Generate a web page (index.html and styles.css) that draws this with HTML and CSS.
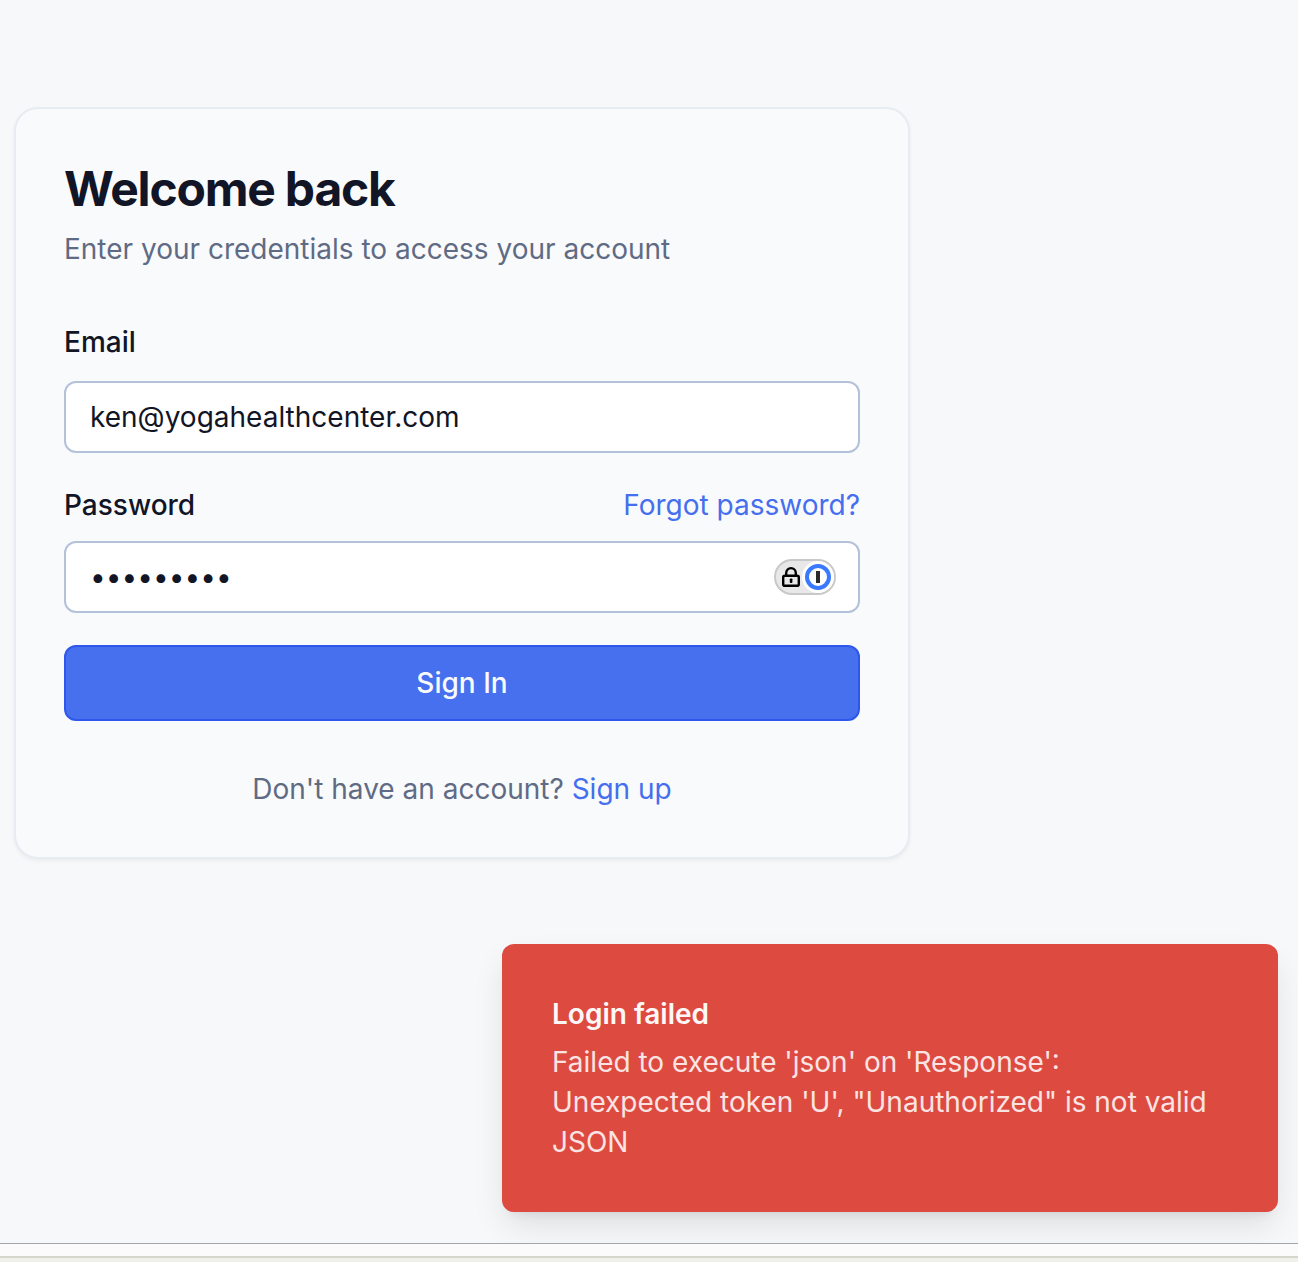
FILE: index.html
```html
<!DOCTYPE html>
<html lang="en">
<head>
<meta charset="utf-8">
<title>Sign In</title>
<link rel="stylesheet" href="styles.css">
</head>
<body>
<main class="page">
  <section class="card">
    <h1 class="title">Welcome back</h1>
    <p class="subtitle">Enter your credentials to access your account</p>
    <form class="form">
      <label class="label" for="email">Email</label>
      <input class="input" id="email" type="text" value="ken@yogahealthcenter.com">
      <div class="label-row">
        <label class="label" for="password">Password</label>
        <a class="link">Forgot password?</a>
      </div>
      <div class="input password-field">
        <input class="password" id="password" type="password" value="password1">
        <svg class="manager" width="62" height="36" viewBox="0 0 62 36">
          <rect x="1" y="1" width="60" height="34" rx="17" fill="#e8e8e8" stroke="#c9c9c9" stroke-width="2"/>
          <circle cx="44" cy="18" r="16" fill="#fff"/>
          <circle cx="44" cy="18" r="11" fill="none" stroke="#3879ff" stroke-width="4"/>
          <rect x="42" y="12" width="4" height="12" fill="#2b2b2b"/>
          <rect x="9.2" y="16.7" width="15.6" height="10.1" rx="1.6" fill="none" stroke="#000" stroke-width="2.4"/>
          <path d="M12.2 16.5v-2.6a4.8 4.8 0 0 1 9.6 0v2.6" fill="none" stroke="#000" stroke-width="2.4"/>
          <rect x="15.8" y="19.5" width="2.6" height="4.5" rx=".8"/>
        </svg>
      </div>
      <button class="submit" type="button">Sign In</button>
    </form>
    <p class="signup">Don't have an account? <a class="link">Sign up</a></p>
  </section>
  <aside class="toast">
    <strong class="toast-title">Login failed</strong>
    <p class="toast-text">Failed to execute 'json' on 'Response': Unexpected token 'U', "Unauthorized" is not valid JSON</p>
  </aside>
</main>
<footer class="bottom-bar"></footer>
</body>
</html>
```

FILE: styles.css
```css
* { box-sizing: border-box; }
body {
  margin: 0;
  height: 1262px;
  overflow: hidden;
  display: flex;
  flex-direction: column;
  background: #f7f8fa;
  color: #111525;
  font: 400 28px/40px Inter, sans-serif;
}
h1, p { margin: 0; }
.page {
  height: 1243px;
  flex: none;
  padding: 107px 20px 0 14px;
  display: flex;
  flex-direction: column;
  overflow: hidden;
}
.card {
  width: 896px;
  height: 752px;
  flex: none;
  padding: 48px;
  border: 2px solid #e6ecf2;
  border-radius: 24px;
  background: #f9fafc;
  box-shadow: 0 2px 4px rgba(0, 0, 0, .05);
}
.title { font-size: 48px; line-height: 64px; font-weight: 700; letter-spacing: -1.2px; }
.subtitle { margin-top: 8px; color: #5f6b84; }
.form { margin-top: 53px; display: flex; flex-direction: column; }
.label { font-weight: 500; }
.input {
  width: 100%;
  height: 72px;
  margin-top: 19px;
  padding: 0 24px;
  border: 2px solid #b4c1da;
  border-radius: 12px;
  background: #fff;
  color: inherit;
  font: inherit;
  outline: none;
}
.label-row { margin-top: 32px; display: flex; justify-content: space-between; }
.link { color: #456fee; }
.password-field { margin-top: 16px; padding-right: 22px; display: flex; align-items: center; }
.password {
  flex: 1;
  min-width: 0;
  padding: 0;
  border: 0;
  background: none;
  color: inherit;
  font: inherit;
  outline: none;
}
.submit {
  height: 76px;
  margin-top: 32px;
  border: 2px solid #2e58ec;
  border-radius: 12px;
  background: #4770ef;
  color: #f8fafc;
  font: inherit;
  font-weight: 500;
}
.signup { margin-top: 48px; text-align: center; color: #5f6b84; }
.toast {
  width: 776px;
  height: 268px;
  flex: none;
  align-self: flex-end;
  margin-top: 85px;
  padding: 50px 66px 50px 50px;
  border-radius: 12px;
  background: #dd4a40;
  color: #fdf8f8;
  box-shadow: 0 16px 34px -4px rgba(0, 0, 0, .11), 0 8px 12px -8px rgba(0, 0, 0, .1);
}
.toast-title { display: block; font-weight: 600; }
.toast-text { margin-top: 8px; color: #fae4e3; }
.bottom-bar {
  height: 19px;
  flex: none;
  border-top: 1px solid #a5a6a8;
  background: linear-gradient(#fbfbfb 12px, #d6d6cc 12px 14px, #f0f0eb 14px);
}
```
